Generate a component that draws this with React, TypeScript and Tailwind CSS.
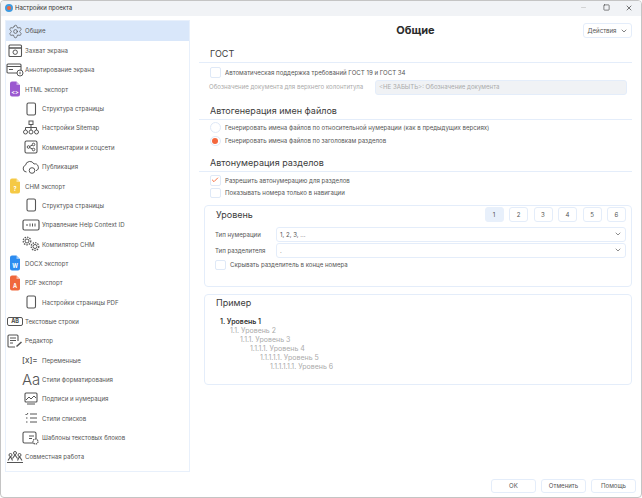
import React from "react";
import { Settings, Square, Minus, X, ChevronDown, Check } from "lucide-react";

const S = { stroke: "#555", fill: "none", strokeWidth: 1 } as const;

function Ic({ children }: { children: React.ReactNode }) {
  return <svg width="18" height="16" viewBox="0 0 18 16" className="shrink-0" {...S}>{children}</svg>;
}

const Page = () => <Ic><rect x="5" y="2" width="8.5" height="12" rx="1.5" strokeWidth="1.1" /></Ic>;
const FileIc = ({ color, label }: { color: string; label: string }) => (
  <svg width="18" height="16" viewBox="0 0 18 16" className="shrink-0">
    <path d="M4 2.5a2 2 0 0 1 2-2h4.500l3.500 3.500v9.500a2 2 0 0 1-2 2h-6a2 2 0 0 1-2-2z" fill={color} />
    <path d="M10.500 .5v3.500h3.500z" fill="#fff" fillOpacity="0.5" />
    <text x="9" y="12.500" fontSize="5.500" fontWeight="700" fill="#fff" textAnchor="middle" fontFamily="Inter, sans-serif">{label}</text>
  </svg>
);

const icons: Record<string, React.ReactNode> = {
  gear: <Settings size={15} strokeWidth={1.2} color="#555" className="shrink-0" />,
  capture: <Ic><rect x="3" y="2" width="12.500" height="11.500" rx="1" strokeWidth="1.100" /><path d="M3 5h12.500" strokeWidth="1.500" /><circle cx="9.200" cy="9.200" r="2.200" /></Ic>,
  annot: <Ic><rect x="1" y="2" width="14" height="9" rx="1" strokeWidth="1.100" /><path d="M1 4.500h14M3 7.500h4" /><circle cx="14" cy="11" r="3" fill="#fff" /><path d="M14 9.800v2.400" /></Ic>,
  sitemap: <Ic><rect x="7" y="1" width="4" height="3.500" /><path d="M9 4.500v3M3.500 10V7.500h11V10M9 7.500V10" /><circle cx="3.500" cy="12" r="2" /><circle cx="9" cy="12" r="2" /><circle cx="14.500" cy="12" r="2" /></Ic>,
  share: <Ic><rect x="3" y="2" width="12" height="12" rx="1.500" strokeWidth="1.100" /><circle cx="6.500" cy="8" r="1.300" /><circle cx="11.500" cy="5.500" r="1.300" /><circle cx="11.500" cy="10.500" r="1.300" /><path d="M7.700 7.400l2.700-1.300M7.700 8.600l2.700 1.300" /></Ic>,
  cloud: <Ic><path d="M4.500 13a3.500 3.500 0 0 1-1-6.800A4.500 4.500 0 0 1 12 5a3.500 3.500 0 0 1 2 6.700" /><circle cx="10" cy="11.500" r="2.800" /></Ic>,
  help: <Ic><rect x="1" y="3" width="16" height="10" rx="1.500" strokeWidth="1.200" /><path d="M4 8h2M8 6.500v3M10.500 6.500v3M13 6.500v3" /></Ic>,
  gears: <svg width="18" height="16" viewBox="0 0 18 16" className="shrink-0" {...S}><circle cx="5" cy="5" r="2" /><circle cx="5" cy="5" r="3.800" strokeDasharray="1.500 1" strokeWidth="1.300" /><circle cx="13" cy="10.500" r="2" /><circle cx="13" cy="10.500" r="3.800" strokeDasharray="1.500 1" strokeWidth="1.300" /></svg>,
  ab: <div className="shrink-0 w-[16px] h-[9px] border border-[#555] rounded-[2px] flex items-center justify-center text-[5.500px] font-bold text-[#444]">AB</div>,
  editor: <Ic><path d="M12 8V3a1 1 0 0 0-1-1H3a1 1 0 0 0-1 1v10a1 1 0 0 0 1 1h6" strokeWidth="1.100" /><path d="M4 5h6M4 7.500h6M4 10h3" /><path d="M10.500 13.500l5-4.500" strokeWidth="1.500" /></Ic>,
  vars: <div className="shrink-0 w-[18px] text-[8px] font-medium text-[#555] leading-none whitespace-nowrap">[x]=</div>,
  aa: <div className="shrink-0 w-[18px] text-[15px] font-light text-[#555] leading-none whitespace-nowrap">Aa</div>,
  caption: <Ic><rect x="3" y="2" width="12" height="9" rx="1" strokeWidth="1.100" /><path d="M4 9l3-3 2 2 3-3 2 2" /><path d="M5 13h8" strokeWidth="1.200" /></Ic>,
  list: <Ic><path d="M8 4h7M8 8h7M8 12h7" /><path d="M3.500 4l1 1 1.500-2M4 8h1.500M4 12h1.500" /></Ic>,
  tpl: <Ic><rect x="1" y="2" width="13" height="11" rx="1.500" strokeWidth="1.100" /><path d="M7 6h5M7 8.500h3" /><circle cx="13.500" cy="11.500" r="2.500" fill="#fff" strokeDasharray="1.500 .7" strokeWidth="1.200" /></Ic>,
  team: <Ic><circle cx="4.500" cy="6" r="1.500" /><circle cx="9" cy="4" r="1.500" /><circle cx="13.500" cy="6" r="1.500" /><path d="M2 11.500l2.500-4 2 4M6.500 9.500L9 6l2.500 3.500M11.500 11.500l2-4 2.500 4M1 13.500h16" strokeWidth="1.100" /></Ic>,
};

const rows: { t: string; i: React.ReactNode; sub?: boolean; active?: boolean }[] = [
  { t: "Общие", i: icons.gear, active: true },
  { t: "Захват экрана", i: icons.capture },
  { t: "Аннотирование экрана", i: icons.annot },
  { t: "HTML экспорт", i: <FileIc color="#9b59d0" label="<>" /> },
  { t: "Структура страницы", i: <Page />, sub: true },
  { t: "Настройки Sitemap", i: icons.sitemap, sub: true },
  { t: "Комментарии и соцсети", i: icons.share, sub: true },
  { t: "Публикация", i: icons.cloud, sub: true },
  { t: "CHM экспорт", i: <FileIc color="#f5c945" label="?" /> },
  { t: "Структура страницы", i: <Page />, sub: true },
  { t: "Управление Help Context ID", i: icons.help, sub: true },
  { t: "Компилятор CHM", i: icons.gears, sub: true },
  { t: "DOCX экспорт", i: <FileIc color="#2d8cf0" label="W" /> },
  { t: "PDF экспорт", i: <FileIc color="#f0683c" label="A" /> },
  { t: "Настройки страницы PDF", i: <Page />, sub: true },
  { t: "Текстовые строки", i: icons.ab },
  { t: "Редактор", i: icons.editor },
  { t: "Переменные", i: icons.vars, sub: true },
  { t: "Стили форматирования", i: icons.aa, sub: true },
  { t: "Подписи и нумерация", i: icons.caption, sub: true },
  { t: "Стили списков", i: icons.list, sub: true },
  { t: "Шаблоны текстовых блоков", i: icons.tpl, sub: true },
  { t: "Совместная работа", i: icons.team },
];

function Box({ children }: { children?: React.ReactNode }) {
  return <div className="w-[10.500px] h-[10.500px] shrink-0 border border-[#dfe9f7] rounded-[2px] bg-white flex items-center justify-center">{children}</div>;
}

function Heading({ t }: { t: string }) {
  return <div className="border-b border-[#e4edfa] pl-[11px] pt-[1px] h-[16px] text-[9px] leading-[12px] text-[#3c3c3c] shrink-0">{t}</div>;
}

function CheckRow({ t, checked }: { t: string; checked?: boolean }) {
  return (
    <div className="flex items-center gap-[4.500px] h-[12.500px] pl-[11px] text-[6.100px] text-[#555] shrink-0">
      <Box>{checked && <Check size={8} strokeWidth={2.5} color="#f4571f" />}</Box>
      <span>{t}</span>
    </div>
  );
}

function RadioRow({ t, on }: { t: string; on?: boolean }) {
  return (
    <div className="flex items-center gap-[4.500px] h-[13.500px] pl-[11px] text-[6.100px] text-[#555] shrink-0">
      <div className="w-[10.500px] h-[10.500px] shrink-0 rounded-full border border-[#dfe9f7] flex items-center justify-center">
        {on && <div className="w-[6px] h-[6px] rounded-full bg-[#f4673c]" />}
      </div>
      <span>{t}</span>
    </div>
  );
}

function Select({ label, value }: { label: string; value: string }) {
  return (
    <div className="flex items-center h-[14.500px] mb-[1.500px]">
      <div className="w-[71px] text-[6.100px] text-[#555] pl-[10px] shrink-0">{label}</div>
      <div className="flex-1 h-[14.500px] border border-[#e4edfa] rounded-[3px] flex items-center justify-between px-[3px] text-[6.100px] text-[#555]">
        <span>{value}</span>
        <ChevronDown size={8} color="#555" />
      </div>
    </div>
  );
}

const sample = ["1. Уровень 1", "1.1. Уровень 2", "1.1.1. Уровень 3", "1.1.1.1. Уровень 4", "1.1.1.1.1. Уровень 5", "1.1.1.1.1.1. Уровень 6"];
const indent = ["ml-0", "ml-[10px]", "ml-[20px]", "ml-[30px]", "ml-[40px]", "ml-[50px]"];

export default function App() {
  return (
    <div className="w-[642px] h-[498px] bg-white flex flex-col overflow-hidden rounded-[4px] border border-[#c4c4c4] font-['Inter','Noto_Sans',sans-serif]">
      <div className="h-[15px] bg-[#f1f3f6] flex items-center shrink-0 pl-[4px] pr-[8px] pb-[2px]">
        <div className="w-[8px] h-[8px] rounded-full bg-[#f0683c] border-2 border-[#3f9be0] mr-[2px]" />
        <span className="text-[6px] text-[#333]">Настройки проекта</span>
        <div className="flex-1" />
        <Minus size={7} color="#bbb" className="mr-[16px]" />
        <Square size={7} color="#333" strokeWidth={2} className="mr-[15px]" />
        <X size={8} color="#333" />
      </div>
      <div className="flex-1 flex min-h-0">
        <div className="w-[185px] ml-[4px] mt-[4px] h-[452px] border border-[#e8f0fb] shrink-0 flex flex-col">
          {rows.map((r, idx) => (
            <div key={idx} className={`flex items-center shrink-0 text-[6.100px] text-[#555] whitespace-nowrap ${r.sub ? "pl-[16px] gap-[2px]" : "gap-[1px]"} ${r.active ? "bg-[#d9e7fa] h-[20px]" : "h-[19.350px]"}`}>
              <div className="w-[18px] flex justify-center shrink-0">{r.i}</div>
              <span>{r.t}</span>
            </div>
          ))}
        </div>
        <div className="flex-1 flex flex-col pl-[9px] pr-[9px] min-w-0">
          <div className="relative h-[24px] mt-[7px] flex items-start justify-center shrink-0">
            <span className="text-[11px] font-bold text-[#2b2b2b] leading-[15px]">Общие</span>
            <div className="absolute right-0 top-0 w-[49px] h-[15px] border border-[#e4edfa] rounded-[3px] flex items-center justify-center gap-[3px] text-[6.100px] text-[#555]">
              Действия <ChevronDown size={8} color="#444" />
            </div>
          </div>
          <Heading t="ГОСТ" />
          <div className="h-[3px] shrink-0" />
          <CheckRow t="Автоматическая поддержка требований ГОСТ 19 и ГОСТ 34" />
          <div className="flex items-center h-[15px] mt-px pl-[10px] text-[6.100px] text-[#aaa] mr-[5px] shrink-0">
            <div className="w-[166px] shrink-0">Обозначение документа для верхнего колонтитула</div>
            <div className="flex-1 h-[15px] bg-[#f0f2f5] border border-[#e4edfa] rounded-[3px] flex items-center px-[3px]">&lt;НЕ ЗАБЫТЬ&gt;: Обозначение документа</div>
          </div>
          <div className="h-[9px] shrink-0" />
          <Heading t="Автогенерация имен файлов" />
          <div className="h-[1px] shrink-0" />
          <RadioRow t="Генерировать имена файлов по относительной нумерации (как в предыдущих версиях)" />
          <RadioRow on t="Генерировать имена файлов по заголовкам разделов" />
          <div className="h-[8px] shrink-0" />
          <Heading t="Автонумерация разделов" />
          <div className="h-[2.500px] shrink-0" />
          <CheckRow checked t="Разрешить автонумерацию для разделов" />
          <CheckRow t="Показывать номера только в навигации" />
          <div className="h-[6px] shrink-0" />
          <div className="ml-[5px] h-[82px] border border-[#e4edfa] rounded-[4px] flex flex-col shrink-0">
            <div className="flex items-start justify-between h-[21px] pt-[1px] pl-[11px] pr-[5px]">
              <span className="text-[9px] leading-[15px] text-[#3c3c3c]">Уровень</span>
              <div className="flex gap-[5.500px]">
                {[1, 2, 3, 4, 5, 6].map((n) => (
                  <div key={n} className={`w-[19px] h-[15px] rounded-[3px] border flex items-center justify-center text-[6.100px] text-[#555] ${n === 1 ? "bg-[#e8f0fb] border-[#e8f0fb]" : "border-[#e4edfa]"}`}>{n}</div>
                ))}
              </div>
            </div>
            <div className="pr-[5px]">
              <Select label="Тип нумерации" value="1, 2, 3, ..." />
              <Select label="Тип разделителя" value="." />
            </div>
            <div className="flex items-center gap-[4.500px] pl-[10px] text-[6.100px] text-[#555] h-[12px]">
              <Box />
              <span>Скрывать разделитель в конце номера</span>
            </div>
          </div>
          <div className="h-[7px] shrink-0" />
          <div className="ml-[5px] h-[91px] border border-[#e4edfa] rounded-[4px] pl-[11px] shrink-0">
            <div className="text-[9px] text-[#3c3c3c] leading-[12px] mt-[2px] mb-[7.500px]">Пример</div>
            <div className="pl-[4px] text-[7px] leading-[9.150px] text-[#aaa]">
              {sample.map((s, i) => (
                <div key={s} className={`${indent[i]} ${i === 0 ? "text-[#333] font-semibold" : ""}`}>{s}</div>
              ))}
            </div>
          </div>
          <div className="flex-1" />
          <div className="flex justify-end gap-[5px] mb-[4px] -mr-[4px] shrink-0">
            {["OK", "Отменить", "Помощь"].map((b) => (
              <div key={b} className="w-[45px] h-[14px] border border-[#e4edfa] rounded-[3px] flex items-center justify-center text-[6.100px] text-[#555]">{b}</div>
            ))}
          </div>
        </div>
      </div>
    </div>
  );
}
